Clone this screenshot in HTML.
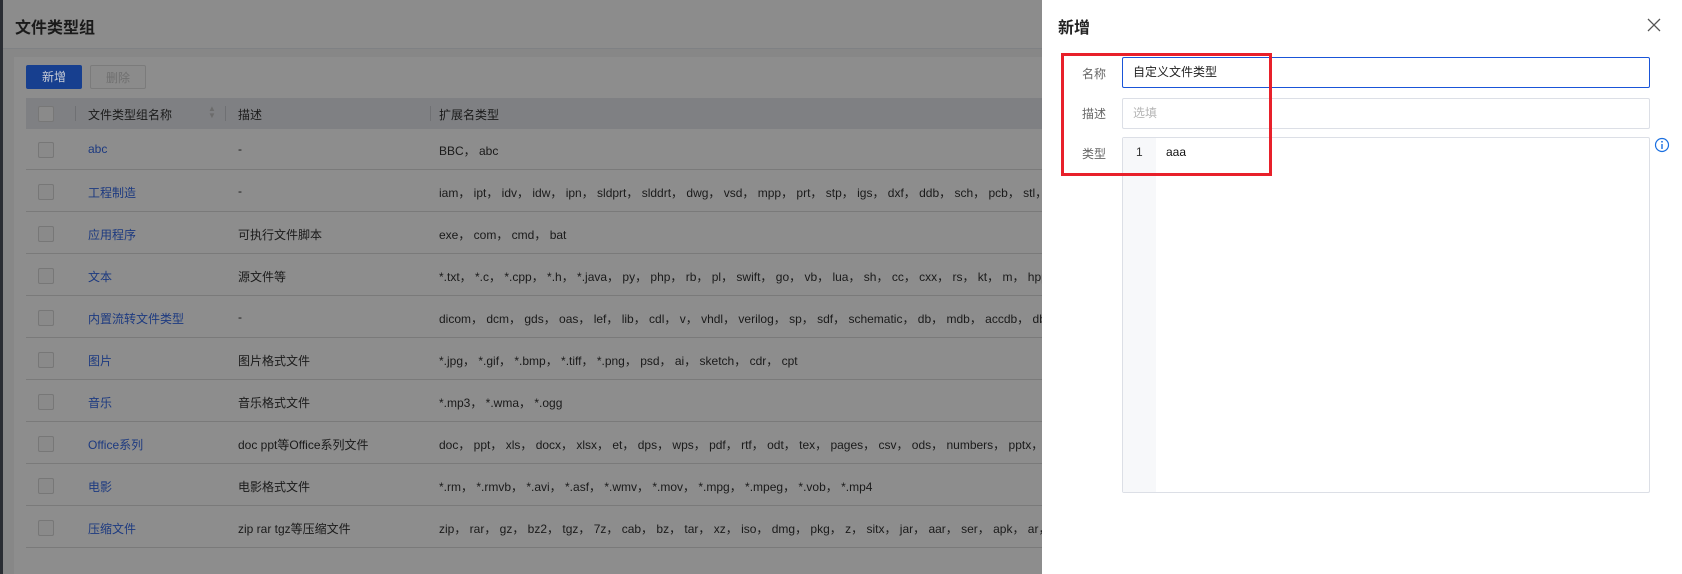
<!DOCTYPE html>
<html><head><meta charset="utf-8"><style>
*{box-sizing:border-box;margin:0;padding:0}
body{width:1682px;height:574px;overflow:hidden;background:#878787;font-family:"Liberation Sans","Noto Sans CJK SC",sans-serif;font-size:12px;color:#1a1a1a;position:relative}
.strip{position:absolute;left:0;top:0;width:3px;height:574px;background:#2a2d33}
.topbar{position:absolute;left:3px;top:0;width:1040px;height:49px;background:#8c8c8c;border-bottom:1px solid #7f8184}
.title{position:absolute;left:12px;top:14px;font-size:16px;font-weight:bold;color:#1a1a1a}
.card{position:absolute;left:14px;top:57px;width:1040px;height:517px;background:#8d8d8d}
.btn{position:absolute;top:65px;height:24px;width:56px;border-radius:2px;text-align:center;line-height:24px;font-size:12px}
.b1{left:26px;background:#173f8f;color:#c9cdd6}
.b2{left:90px;border:1px solid #7b7b7b;color:#6f6f6f;background:#8b8b8b}
.thead{position:absolute;left:26px;top:98px;width:1020px;height:31px;background:#7f8083;}
.row{position:absolute;left:26px;width:1020px;height:42px;border-bottom:1px solid #7a7a7a}
.cb{position:absolute;left:12px;width:16px;height:16px;border:1px solid #777;background:#8a8a8a;border-radius:2px}
.c{position:absolute;white-space:nowrap}
.link{color:#1d3a80}
.sep{position:absolute;top:8px;width:1px;height:15px;background:#6f7073}
.drawer{position:absolute;left:1042px;top:0;width:640px;height:574px;background:#fff}
.dt{position:absolute;left:16px;top:14px;font-size:16px;font-weight:bold;color:#222}
.lab{position:absolute;right:576px;color:#666;font-size:12px}
.inp{position:absolute;left:80px;width:528px;border:1px solid #dcdfe6;border-radius:2px;padding-left:10px;font-size:12px}
.red{position:absolute;left:19px;top:53px;width:211px;height:123px;border:3px solid #e8202a}
</style></head><body>
<div class="strip"></div>
<div class="topbar"><div class="title">文件类型组</div></div>
<div class="card"></div>
<div class="btn b1">新增</div><div class="btn b2">删除</div>
<div class="thead">
<div class="cb" style="top:8px"></div>
<div class="sep" style="left:49px"></div>
<div class="c" style="left:62px;top:8px">文件类型组名称</div>
<div class="c" style="left:182px;top:7px;color:#6b6b6b;font-size:8px;line-height:7px">▲<br>▼</div>
<div class="sep" style="left:199px"></div>
<div class="c" style="left:212px;top:8px">描述</div>
<div class="sep" style="left:404px"></div>
<div class="c" style="left:413px;top:8px">扩展名类型</div>
</div>
<div class="row" style="top:128px"><div class="cb" style="top:14px"></div><div class="c link" style="left:62px;top:14px">abc</div><div class="c" style="left:212px;top:14px">-</div><div class="c" style="left:413px;top:14px">BBC， abc</div></div>
<div class="row" style="top:170px"><div class="cb" style="top:14px"></div><div class="c link" style="left:62px;top:14px">工程制造</div><div class="c" style="left:212px;top:14px">-</div><div class="c" style="left:413px;top:14px">iam， ipt， idv， idw， ipn， sldprt， slddrt， dwg， vsd， mpp， prt， stp， igs， dxf， ddb， sch， pcb， stl，</div></div>
<div class="row" style="top:212px"><div class="cb" style="top:14px"></div><div class="c link" style="left:62px;top:14px">应用程序</div><div class="c" style="left:212px;top:14px">可执行文件脚本</div><div class="c" style="left:413px;top:14px">exe， com， cmd， bat</div></div>
<div class="row" style="top:254px"><div class="cb" style="top:14px"></div><div class="c link" style="left:62px;top:14px">文本</div><div class="c" style="left:212px;top:14px">源文件等</div><div class="c" style="left:413px;top:14px">*.txt， *.c， *.cpp， *.h， *.java， py， php， rb， pl， swift， go， vb， lua， sh， cc， cxx， rs， kt， m， hpp</div></div>
<div class="row" style="top:296px"><div class="cb" style="top:14px"></div><div class="c link" style="left:62px;top:14px">内置流转文件类型</div><div class="c" style="left:212px;top:14px">-</div><div class="c" style="left:413px;top:14px">dicom， dcm， gds， oas， lef， lib， cdl， v， vhdl， verilog， sp， sdf， schematic， db， mdb， accdb， db</div></div>
<div class="row" style="top:338px"><div class="cb" style="top:14px"></div><div class="c link" style="left:62px;top:14px">图片</div><div class="c" style="left:212px;top:14px">图片格式文件</div><div class="c" style="left:413px;top:14px">*.jpg， *.gif， *.bmp， *.tiff， *.png， psd， ai， sketch， cdr， cpt</div></div>
<div class="row" style="top:380px"><div class="cb" style="top:14px"></div><div class="c link" style="left:62px;top:14px">音乐</div><div class="c" style="left:212px;top:14px">音乐格式文件</div><div class="c" style="left:413px;top:14px">*.mp3， *.wma， *.ogg</div></div>
<div class="row" style="top:422px"><div class="cb" style="top:14px"></div><div class="c link" style="left:62px;top:14px">Office系列</div><div class="c" style="left:212px;top:14px">doc ppt等Office系列文件</div><div class="c" style="left:413px;top:14px">doc， ppt， xls， docx， xlsx， et， dps， wps， pdf， rtf， odt， tex， pages， csv， ods， numbers， pptx，</div></div>
<div class="row" style="top:464px"><div class="cb" style="top:14px"></div><div class="c link" style="left:62px;top:14px">电影</div><div class="c" style="left:212px;top:14px">电影格式文件</div><div class="c" style="left:413px;top:14px">*.rm， *.rmvb， *.avi， *.asf， *.wmv， *.mov， *.mpg， *.mpeg， *.vob， *.mp4</div></div>
<div class="row" style="top:506px"><div class="cb" style="top:14px"></div><div class="c link" style="left:62px;top:14px">压缩文件</div><div class="c" style="left:212px;top:14px">zip rar tgz等压缩文件</div><div class="c" style="left:413px;top:14px">zip， rar， gz， bz2， tgz， 7z， cab， bz， tar， xz， iso， dmg， pkg， z， sitx， jar， aar， ser， apk， ar，</div></div>

<div class="drawer">
<div class="dt">新增</div>
<svg style="position:absolute;left:605px;top:18px" width="14" height="14" viewBox="0 0 14 14"><path d="M1 1L13 13M13 1L1 13" stroke="#555" stroke-width="1.3"/></svg>
<div class="lab" style="top:65px">名称</div>
<div class="inp" style="top:57px;height:31px;line-height:29px;border-color:#1a55d8;color:#222">自定义文件类型</div>
<div class="lab" style="top:105px">描述</div>
<div class="inp" style="top:98px;height:31px;line-height:29px;color:#b5b5b5">选填</div>
<div class="lab" style="top:145px">类型</div>
<div class="inp" style="top:137px;height:356px;padding:0">
<div style="position:absolute;left:0;top:0;width:33px;height:100%;background:#f7f8fa"></div>
<div style="position:absolute;left:13px;top:7px;color:#333">1</div>
<div style="position:absolute;left:43px;top:7px;color:#111">aaa</div>
</div>
<svg style="position:absolute;left:612px;top:137px" width="16" height="16" viewBox="0 0 16 16"><circle cx="8" cy="8" r="6.5" fill="none" stroke="#1a6fe0" stroke-width="1.2"/><circle cx="8" cy="4.8" r="0.9" fill="#1a6fe0"/><path d="M8 7v5" stroke="#1a6fe0" stroke-width="1.4"/></svg>
<div class="red"></div>
</div>
</body></html>
